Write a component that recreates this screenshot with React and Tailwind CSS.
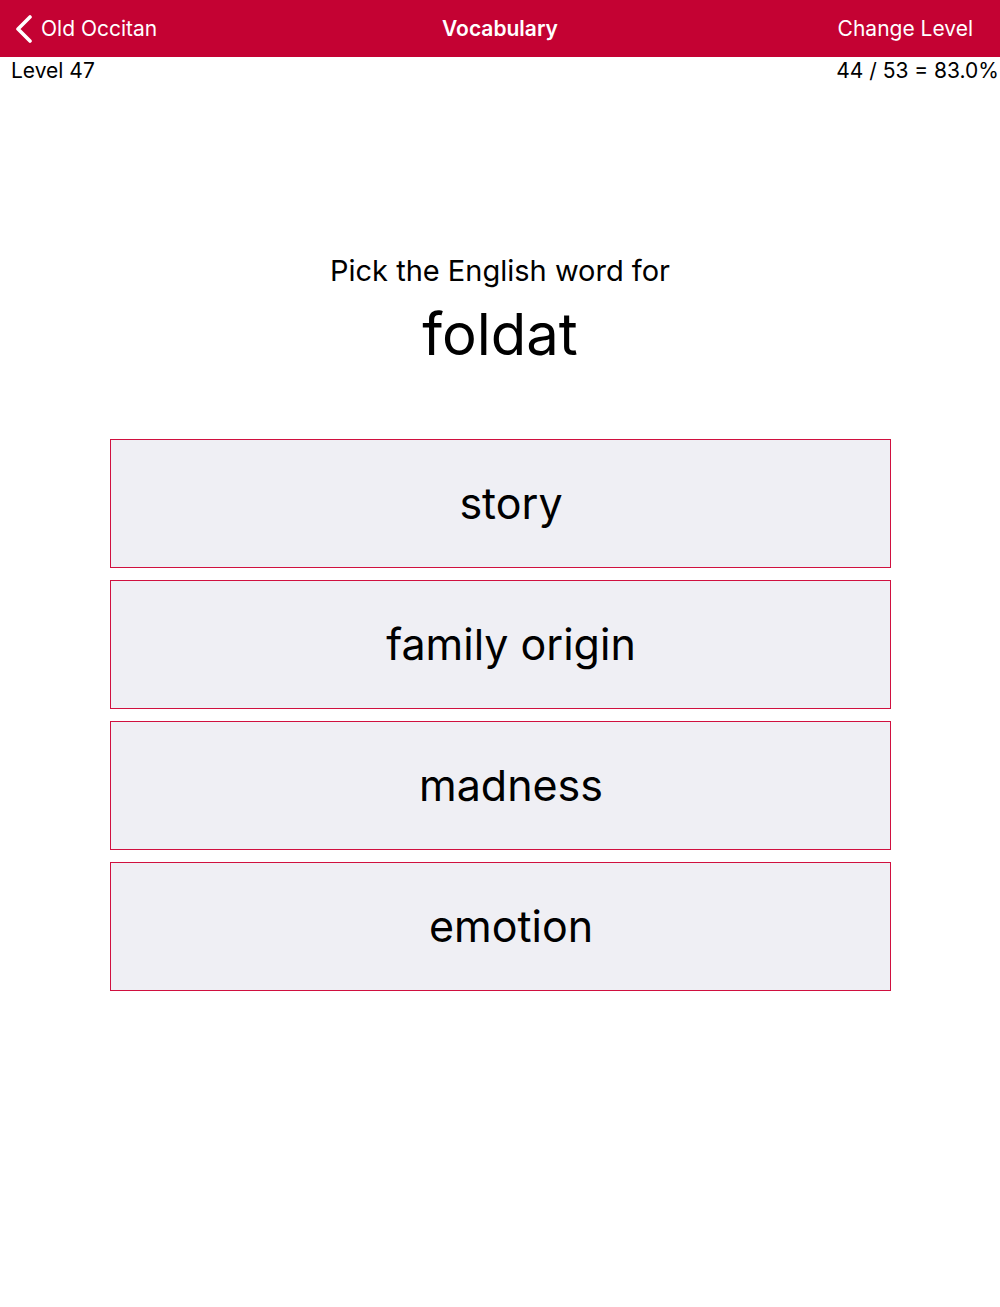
const choices = ['story', 'family origin', 'madness', 'emotion'];

function BackChevron() {
  return (
    <svg width="18" height="28" viewBox="0 0 18 28" className="shrink-0">
      <polyline points="15,2 3,14 15,26" fill="none" stroke="white" strokeWidth="3.6" strokeLinecap="round" strokeLinejoin="round" />
    </svg>
  );
}

export default function App() {
  return (
    <div className="w-[1000px] h-[1307px] bg-white text-black" style={{ fontFamily: 'Inter, "Noto Sans", sans-serif' }}>
      <header className="h-[57px] bg-[#c40233] flex items-center justify-between text-white text-[21px] relative">
        <div className="flex items-center pl-[15px]">
          <BackChevron />
          <span className="ml-[8px]">Old Occitan</span>
        </div>
        <span className="absolute left-0 right-0 text-center font-semibold pointer-events-none">Vocabulary</span>
        <span className="pr-[27px]">Change Level</span>
      </header>
      <div className="flex justify-between text-[21px] leading-[28px] pl-[11px] pr-[1px]">
        <span>Level 47</span>
        <span>44 / 53 = 83.0%</span>
      </div>
      <div className="mt-[169px] text-center text-[29px] leading-[34px]">Pick the English word for</div>
      <div className="text-center text-[58px] leading-[70px] mt-[11px]">foldat</div>
      <div className="mt-[70px] flex flex-col gap-[12px] items-center">
        {choices.map((c) => (
          <button
            key={c}
            className="w-[781px] h-[129px] border-[1.5px] border-[#d0103f] bg-[#efeff4] text-[43px] pl-[22px] flex items-center justify-center"
          >
            {c}
          </button>
        ))}
      </div>
    </div>
  );
}
